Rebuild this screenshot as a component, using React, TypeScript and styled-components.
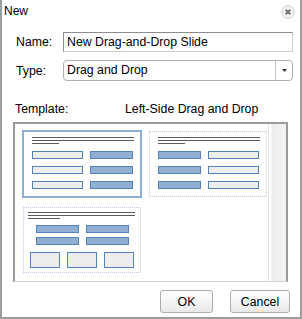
import styled, { createGlobalStyle } from "styled-components";

const GlobalStyle = createGlobalStyle`
  html, body {
    margin: 0;
    padding: 0;
    background: #fff;
  }
  body {
    font-family: "Liberation Sans", Arial, sans-serif;
    font-size: 12.3px;
    color: #000;
  }
`;

const Dialog = styled.div`
  width: 302px;
  height: 319px;
  box-sizing: border-box;
  border: 2px solid #9d9d9d;
  border-top: none;
  background: #fff;
  display: flex;
  flex-direction: column;
`;

const Header = styled.header`
  height: 24px;
  display: flex;
  justify-content: space-between;
  align-items: flex-start;
  padding: 0 5px 0 2px;
`;

const Title = styled.span`
  font-size: 12px;
  line-height: 14px;
  margin-top: 4px;
`;

const CloseButton = styled.button`
  width: 14px;
  height: 14px;
  margin-top: 5px;
  padding: 0;
  border: none;
  background: none;
  display: flex;
`;

const Form = styled.div`
  display: grid;
  grid-template-columns: 47px 230px;
  row-gap: 8px;
  align-items: center;
  padding-left: 14px;
  margin-top: 8px;
`;

const Label = styled.label`
  line-height: 14px;
`;

const TextInput = styled.div`
  height: 20px;
  box-sizing: border-box;
  border: 1px solid #cfcfcf;
  border-top-color: #8e8e8e;
  border-left-color: #8e8e8e;
  padding-left: 3px;
  line-height: 18px;
`;

const Select = styled.div`
  height: 21px;
  box-sizing: border-box;
  border: 1px solid #b0b0b0;
  border-radius: 4px;
  display: flex;
`;

const SelectValue = styled.span`
  flex: 1;
  padding-left: 3px;
  line-height: 19px;
`;

const SelectArrow = styled.span`
  width: 16px;
  border-left: 1px solid #c8c8c8;
  display: flex;
  align-items: center;
  justify-content: center;
`;

const TemplateRow = styled.div`
  display: flex;
  padding-left: 13px;
  margin-top: 21px;
  line-height: 14px;
`;

const TemplateLabel = styled.span`
  width: 110px;
`;

const TemplateBox = styled.div`
  margin: 6px 0 0 11px;
  width: 275px;
  height: 160px;
  box-sizing: border-box;
  border: 2px solid #9a9a9a;
  border-bottom: 1px solid #d2d2d2;
  display: flex;
`;

const ThumbGrid = styled.div`
  flex: 1;
  display: flex;
  flex-wrap: wrap;
  align-content: flex-start;
  gap: 8px 6px;
  padding: 6px 0 0 7px;
`;

const Thumb = styled.div<{ $selected?: boolean }>`
  box-sizing: border-box;
  width: ${(p) => (p.$selected ? 120 : 118)}px;
  height: ${(p) => (p.$selected ? 68 : 66)}px;
  margin: ${(p) => (p.$selected ? 0 : 1)}px;
  border: ${(p) => (p.$selected ? "2px solid #8eaed6" : "1px dotted #bccfe6")};
  background: #fff;
  display: flex;
`;

const ScrollTrack = styled.div`
  width: 17px;
  border-left: 1px solid #e2e2e2;
  background: linear-gradient(to right, #fdfdfd 0, #fdfdfd 2px, #ececec 3px, #f4f4f4 100%);
`;

const Footer = styled.div`
  display: flex;
  justify-content: flex-end;
  gap: 17px;
  padding: 8px 10px 0 0;
`;

const Button = styled.button<{ $width: number }>`
  width: ${(p) => p.$width}px;
  height: 23px;
  box-sizing: border-box;
  border: 1px solid #adadad;
  border-radius: 3px;
  background: linear-gradient(#ffffff, #e9e9e9);
  font-family: "Liberation Sans", Arial, sans-serif;
  font-size: 12.3px;
  color: #000;
  padding: 0;
`;

type Box = { x: number; y: number; w: number; h: number; blue?: boolean };
type Layout = { lines: number[]; lineX: number; lineW: number; shortW: number; boxes: Box[] };

const layouts: Layout[] = [
  {
    lines: [5, 8, 11],
    lineX: 8,
    lineW: 102,
    shortW: 27,
    boxes: [19, 34, 49].flatMap((y) => [
      { x: 8, y, w: 51, h: 8 },
      { x: 66, y, w: 43, h: 8, blue: true },
    ]),
  },
  {
    lines: [5, 8, 11],
    lineX: 8,
    lineW: 102,
    shortW: 27,
    boxes: [19, 34, 49].flatMap((y) => [
      { x: 8, y, w: 43, h: 8, blue: true },
      { x: 58, y, w: 51, h: 8 },
    ]),
  },
  {
    lines: [4, 7, 10],
    lineX: 4,
    lineW: 107,
    shortW: 32,
    boxes: [
      { x: 12, y: 17, w: 43, h: 8, blue: true },
      { x: 62, y: 17, w: 43, h: 8, blue: true },
      { x: 12, y: 29, w: 43, h: 8, blue: true },
      { x: 62, y: 29, w: 43, h: 8, blue: true },
      { x: 6, y: 44, w: 30, h: 16 },
      { x: 43, y: 44, w: 30, h: 16 },
      { x: 80, y: 44, w: 30, h: 16 },
    ],
  },
];

function SlidePreview({ layout }: { layout: Layout }) {
  return (
    <svg width="116" height="64" viewBox="0 0 116 64">
      {layout.lines.map((y, i) => (
        <rect
          key={y}
          x={layout.lineX}
          y={y}
          width={i === 2 ? layout.shortW : layout.lineW}
          height="1"
          fill="#5a5a5a"
        />
      ))}
      {layout.boxes.map((b, i) => (
        <rect
          key={i}
          x={b.x + 0.5}
          y={b.y + 0.5}
          width={b.w - 1}
          height={b.h - 1}
          fill={b.blue ? "#91afd3" : "#ededed"}
          stroke="#5583b9"
          strokeWidth="1"
        />
      ))}
    </svg>
  );
}

export default function App() {
  return (
    <>
      <GlobalStyle />
      <Dialog>
        <Header>
          <Title>New</Title>
          <CloseButton aria-label="Close">
            <svg width="14" height="14" viewBox="0 0 14 14">
              <circle cx="7" cy="7" r="6.2" fill="#f6f6f6" stroke="#c9c9c9" strokeWidth="1" />
              <path d="M4.6 4.6 L9.4 9.4 M9.4 4.6 L4.6 9.4" stroke="#6e6e6e" strokeWidth="2" />
            </svg>
          </CloseButton>
        </Header>
        <Form>
          <Label>Name:</Label>
          <TextInput>New Drag-and-Drop Slide</TextInput>
          <Label>Type:</Label>
          <Select>
            <SelectValue>Drag and Drop</SelectValue>
            <SelectArrow>
              <svg width="5" height="3" viewBox="0 0 5 3">
                <path d="M0 0 H5 L2.5 3 Z" fill="#333" />
              </svg>
            </SelectArrow>
          </Select>
        </Form>
        <TemplateRow>
          <TemplateLabel>Template:</TemplateLabel>
          <span>Left-Side Drag and Drop</span>
        </TemplateRow>
        <TemplateBox>
          <ThumbGrid>
            {layouts.map((l, i) => (
              <Thumb key={i} $selected={i === 0}>
                <SlidePreview layout={l} />
              </Thumb>
            ))}
          </ThumbGrid>
          <ScrollTrack />
        </TemplateBox>
        <Footer>
          <Button $width={53}>OK</Button>
          <Button $width={60}>Cancel</Button>
        </Footer>
      </Dialog>
    </>
  );
}
